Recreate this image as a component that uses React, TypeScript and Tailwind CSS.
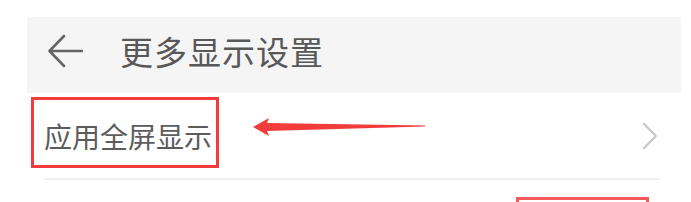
import React from 'react';

const font = { fontFamily: '"Noto Sans CJK SC", "Noto Sans", sans-serif' };

export default function App() {
  return (
    <div className="relative w-[691px] h-[202px] overflow-hidden bg-white" style={font}>
      {/* header */}
      <div className="pt-[17px] pl-[27px] pr-[10px]">
        <div className="flex h-[76px] items-center bg-[#f5f5f5] pl-[20px] pb-[8px]">
          <svg width="36" height="34" viewBox="0 0 36 34" className="shrink-0">
            <path d="M35 17H3M17 2L2.5 17L17 32" fill="none" stroke="#666" strokeWidth="2.6" strokeLinecap="round" strokeLinejoin="round" />
          </svg>
          <span className="ml-[37px] text-[33px] leading-none tracking-[1px] text-[#585858]">更多显示设置</span>
        </div>
      </div>

      {/* row */}
      <div className="ml-[44px] mr-[31px] flex h-[87px] items-center justify-between border-b-2 border-[#f0f0f0]">
        <span className="text-[28px] leading-none text-[#5c5c5c]">应用全屏显示</span>
        <svg width="16" height="28" viewBox="0 0 16 28" className="mr-[2px]">
          <path d="M2 2L14 14L2 26" fill="none" stroke="#c8c8c8" strokeWidth="2.4" strokeLinecap="round" strokeLinejoin="round" />
        </svg>
      </div>

      {/* annotations */}
      <div className="absolute left-[31px] top-[97px] h-[71px] w-[188px] border-[3px] border-[#f23b3b]" />
      <div className="absolute left-[516px] top-[197px] h-[40px] w-[133px] border-[3px] border-[#f55a5a]" />
      <svg className="absolute left-[250px] top-[114px]" width="180" height="24" viewBox="0 0 180 24">
        <polygon points="3,13 19,4 17,9 175,11.5 175,12.5 17,17 19,22" fill="#f23b3b" />
      </svg>
    </div>
  );
}
